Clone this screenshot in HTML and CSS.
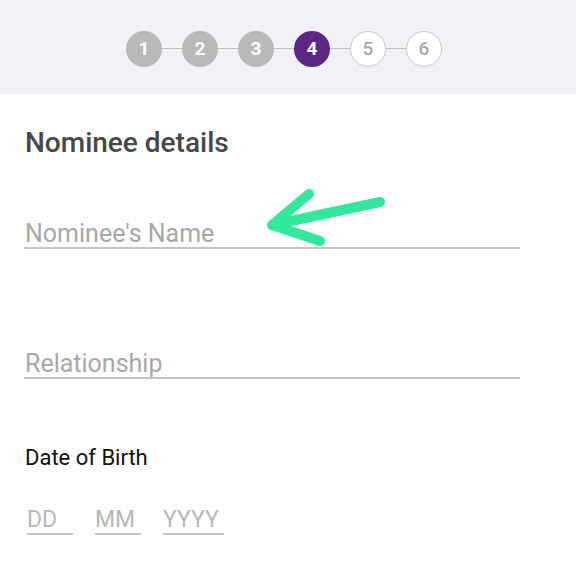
FILE: index.html
```html
<!DOCTYPE html>
<html lang="en">
<head>
<meta charset="utf-8">
<title>Nominee details</title>
<link rel="stylesheet" href="styles.css">
</head>
<body>
<header class="stepper-bar">
  <ol class="stepper">
    <li class="step done">1</li>
    <li class="link"></li>
    <li class="step done">2</li>
    <li class="link"></li>
    <li class="step done">3</li>
    <li class="link"></li>
    <li class="step current">4</li>
    <li class="link"></li>
    <li class="step todo">5</li>
    <li class="link"></li>
    <li class="step todo">6</li>
  </ol>
</header>
<main class="form">
  <h1 class="title">Nominee details</h1>
  <div class="field field-name"><span class="placeholder">Nominee's Name</span></div>
  <div class="field field-rel"><span class="placeholder">Relationship</span></div>
  <div class="dob-label">Date of Birth</div>
  <div class="dob">
    <span class="dob-part dd">DD</span>
    <span class="dob-part mm">MM</span>
    <span class="dob-part yy">YYYY</span>
  </div>
  <svg class="arrow" width="130" height="70" viewBox="0 0 130 70" aria-hidden="true">
    <path d="M120 22 L12 45 M49 14 L12 45 L60 61" fill="none" stroke="#33e79c" stroke-width="10" stroke-linecap="round" stroke-linejoin="round"/>
  </svg>
</main>
</body>
</html>
```
FILE: styles.css
```css
html, body {
  margin: 0;
  padding: 0;
  background: #ffffff;
  font-family: Roboto, "Liberation Sans", sans-serif;
}

.stepper-bar {
  height: 94px;
  background: #f2f1f6;
  display: flex;
  align-items: center;
  justify-content: center;
  border-bottom: 1px solid #ececf0;
  box-sizing: border-box;
  padding-right: 8px;
  padding-top: 4px;
}

.stepper {
  list-style: none;
  margin: 0;
  padding: 0;
  display: flex;
  align-items: center;
}

.step {
  width: 36px;
  height: 36px;
  border-radius: 50%;
  box-sizing: border-box;
  display: flex;
  align-items: center;
  justify-content: center;
  font-size: 19px;
  font-weight: 700;
}

.step.done {
  background: #b9b9b9;
  color: #ffffff;
}

.step.current {
  background: #5c2783;
  color: #ffffff;
}

.step.todo {
  background: #ffffff;
  border: 1.5px solid #c8c8c8;
  color: #a9a9a9;
  font-weight: 500;
}

.link {
  width: 20px;
  height: 1px;
  background: #c2c2c2;
}

.form {
  position: relative;
  padding: 33px 56px 0 24px;
}

.title {
  margin: 0 0 0 1px;
  font-size: 28px;
  line-height: 32px;
  font-weight: 500;
  color: #474747;
}

.field {
  border-bottom: 2px solid #c4c4c4;
  height: 26px;
  line-height: 26px;
}

.field-name {
  margin-top: 62px;
}

.field-rel {
  margin-top: 102px;
}

.placeholder {
  font-size: 25px;
  color: #a8a8a8;
  padding-left: 1px;
}

.dob-label {
  margin: 66px 0 0 1px;
  font-size: 22px;
  line-height: 26px;
  color: #111111;
}

.dob {
  display: flex;
  gap: 22px;
  margin-top: 36px;
  padding-left: 3px;
}

.dob-part {
  font-size: 23px;
  line-height: 26px;
  color: #b8b8b8;
  border-bottom: 2px solid #c4c4c4;
  box-sizing: border-box;
}

.dd { width: 46px; }
.mm { width: 46px; }
.yy { width: 61px; }

.arrow {
  position: absolute;
  left: 260px;
  top: 86px;
}
```
